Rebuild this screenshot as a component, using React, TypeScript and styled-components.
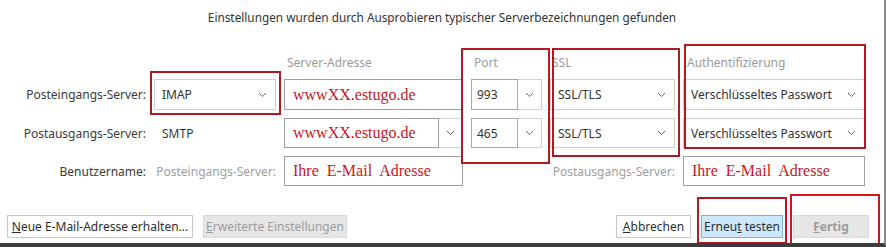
import styled, { createGlobalStyle } from "styled-components";

const Global = createGlobalStyle`
  html, body {
    margin: 0;
    padding: 0;
    background: #ffffff;
  }
  body {
    font-family: "Noto Sans", "DejaVu Sans", sans-serif;
  }
`;

const Window = styled.div`
  position: relative;
  width: 886px;
  height: 247px;
  box-sizing: border-box;
  background: #ffffff;
  border-right: 2px solid #8a8a8a;
  border-bottom: 4px solid #3c3c3c;
  overflow: hidden;
`;

const Title = styled.div`
  padding-top: 8px;
  height: 18px;
  text-align: center;
  font-size: 11.8px;
  line-height: 18px;
  color: #333333;
`;

const Form = styled.div`
  display: grid;
  grid-template-columns: 146px 122px 179px 71px 125px 182px;
  grid-template-rows: 16px 31px 30px 30px;
  column-gap: 8px;
  row-gap: 8px;
  margin-top: 29px;
  align-items: center;
`;

const ColHead = styled.div<{ $col: number; $pad?: number }>`
  grid-column: ${(p) => p.$col};
  grid-row: 1;
  font-size: 12px;
  color: #9a9a9a;
  padding-left: ${(p) => p.$pad ?? 3}px;
  line-height: 16px;
`;

const Label = styled.div<{ $row: number; $col?: string; $muted?: boolean }>`
  grid-row: ${(p) => p.$row};
  grid-column: ${(p) => p.$col ?? "1"};
  text-align: right;
  font-size: 12px;
  color: ${(p) => (p.$muted ? "#a0a0a0" : "#3a3a3a")};
  white-space: nowrap;
`;

const Plain = styled.div`
  grid-row: 3;
  grid-column: 2;
  font-size: 12px;
  color: #3a3a3a;
  padding-left: 8px;
`;

const Select = styled.div<{ $row: number; $col: number }>`
  grid-row: ${(p) => p.$row};
  grid-column: ${(p) => p.$col};
  align-self: stretch;
  display: flex;
  align-items: center;
  justify-content: space-between;
  border: 1px solid #cfcfcf;
  background: #ffffff;
  padding: 0 8px 0 7px;
  font-size: 12px;
  color: #333333;
`;

const Combo = styled.div<{ $row: number; $col: number }>`
  grid-row: ${(p) => p.$row};
  grid-column: ${(p) => p.$col};
  align-self: stretch;
  display: flex;
`;

const ComboText = styled.div<{ $serif?: boolean }>`
  flex: 1;
  display: flex;
  align-items: center;
  border: 1px solid ${(p) => (p.$serif ? "#9f9f9f" : "#a8a8a8")};
  padding-left: ${(p) => (p.$serif ? 8 : 5)}px;
  font-size: ${(p) => (p.$serif ? "16px" : "12px")};
  font-family: ${(p) =>
    p.$serif ? '"Liberation Serif", "Times New Roman", serif' : "inherit"};
  color: ${(p) => (p.$serif ? "#c8161e" : "#333333")};
  white-space: pre;
`;

const ComboButton = styled.div`
  width: 23px;
  display: flex;
  align-items: center;
  justify-content: center;
  border: 1px solid #d2d2d2;
  border-left: none;
`;

const TextField = styled.div<{ $row: number; $col: string }>`
  grid-row: ${(p) => p.$row};
  grid-column: ${(p) => p.$col};
  align-self: stretch;
  display: flex;
  align-items: center;
  border: 1px solid #9f9f9f;
  padding-left: 8px;
  font-family: "Liberation Serif", "Times New Roman", serif;
  font-size: 16px;
  color: #c8161e;
  white-space: pre;
`;

const Footer = styled.div`
  display: flex;
  align-items: center;
  margin-top: 29px;
  padding: 0 15px 0 7px;
  gap: 10px;
`;

const Spacer = styled.div`
  flex: 1;
`;

const Button = styled.div<{ $kind?: "normal" | "disabled" | "default"; $bold?: boolean; $w: number }>`
  box-sizing: border-box;
  width: ${(p) => p.$w}px;
  height: 23px;
  display: flex;
  align-items: center;
  justify-content: center;
  font-size: 12px;
  font-weight: ${(p) => (p.$bold ? 700 : 400)};
  white-space: nowrap;
  border: 1px solid
    ${(p) =>
      p.$kind === "disabled" ? "#dadada" : p.$kind === "default" ? "#7ab2de" : "#c9c9c9"};
  background: ${(p) =>
    p.$kind === "disabled" ? "#e6e6e6" : p.$kind === "default" ? "#cde8fc" : "#ffffff"};
  color: ${(p) => (p.$kind === "disabled" ? "#9c9c9c" : "#2e2e2e")};
`;

const Key = styled.span`
  text-decoration: underline;
`;

const Mark = styled.div<{ $x: number; $y: number; $w: number; $h: number; $bright?: boolean }>`
  position: absolute;
  left: ${(p) => p.$x}px;
  top: ${(p) => p.$y}px;
  width: ${(p) => p.$w}px;
  height: ${(p) => p.$h}px;
  box-sizing: border-box;
  border: 2px solid ${(p) => (p.$bright ? "#d8121b" : "#b01a20")};
  pointer-events: none;
`;

const Chevron = () => (
  <svg width="9" height="6" viewBox="0 0 9 6">
    <polyline points="1,1 4.5,4.5 8,1" fill="none" stroke="#6b6b6b" strokeWidth="1" />
  </svg>
);

export default function App() {
  return (
    <Window>
      <Global />
      <Title>Einstellungen wurden durch Ausprobieren typischer Serverbezeichnungen gefunden</Title>
      <Form>
        <ColHead $col={3}>Server-Adresse</ColHead>
        <ColHead $col={4}>Port</ColHead>
        <ColHead $col={5} $pad={2}>SSL</ColHead>
        <ColHead $col={6} $pad={4}>Authentifizierung</ColHead>

        <Label $row={2}>Posteingangs-Server:</Label>
        <Select $row={2} $col={2}>
          IMAP
          <Chevron />
        </Select>
        <TextField $row={2} $col="3">wwwXX.estugo.de</TextField>
        <Combo $row={2} $col={4}>
          <ComboText>993</ComboText>
          <ComboButton>
            <Chevron />
          </ComboButton>
        </Combo>
        <Select $row={2} $col={5}>
          SSL/TLS
          <Chevron />
        </Select>
        <Select $row={2} $col={6}>
          Verschlüsseltes Passwort
          <Chevron />
        </Select>

        <Label $row={3}>Postausgangs-Server:</Label>
        <Plain>SMTP</Plain>
        <Combo $row={3} $col={3}>
          <ComboText $serif>wwwXX.estugo.de</ComboText>
          <ComboButton>
            <Chevron />
          </ComboButton>
        </Combo>
        <Combo $row={3} $col={4}>
          <ComboText>465</ComboText>
          <ComboButton>
            <Chevron />
          </ComboButton>
        </Combo>
        <Select $row={3} $col={5}>
          SSL/TLS
          <Chevron />
        </Select>
        <Select $row={3} $col={6}>
          Verschlüsseltes Passwort
          <Chevron />
        </Select>

        <Label $row={4}>Benutzername:</Label>
        <Label $row={4} $col="2" $muted>
          Posteingangs-Server:
        </Label>
        <TextField $row={4} $col="3">Ihre  E-Mail  Adresse</TextField>
        <Label $row={4} $col="4 / span 2" $muted>
          Postausgangs-Server:
        </Label>
        <TextField $row={4} $col="6">Ihre  E-Mail  Adresse</TextField>
      </Form>

      <Footer>
        <Button $w={186}>
          <span>
            <Key>N</Key>eue E-Mail-Adresse erhalten...
          </span>
        </Button>
        <Button $w={144} $kind="disabled">
          <span>
            <Key>E</Key>rweiterte Einstellungen
          </span>
        </Button>
        <Spacer />
        <Button $w={75}>
          <span>
            <Key>A</Key>bbrechen
          </span>
        </Button>
        <Button $w={82} $kind="default">
          <span>
            Erneu<Key>t</Key> testen
          </span>
        </Button>
        <Button $w={76} $kind="disabled" $bold>
          <span>
            <Key>F</Key>ertig
          </span>
        </Button>
      </Footer>

      <Mark $x={150} $y={71} $w={131} $h={44} />
      <Mark $x={461} $y={48} $w={89} $h={116} />
      <Mark $x={552} $y={48} $w={128} $h={109} />
      <Mark $x={684} $y={44} $w={182} $h={105} />
      <Mark $x={697} $y={197} $w={90} $h={47} />
      <Mark $x={790} $y={194} $w={90} $h={53} $bright />
    </Window>
  );
}
